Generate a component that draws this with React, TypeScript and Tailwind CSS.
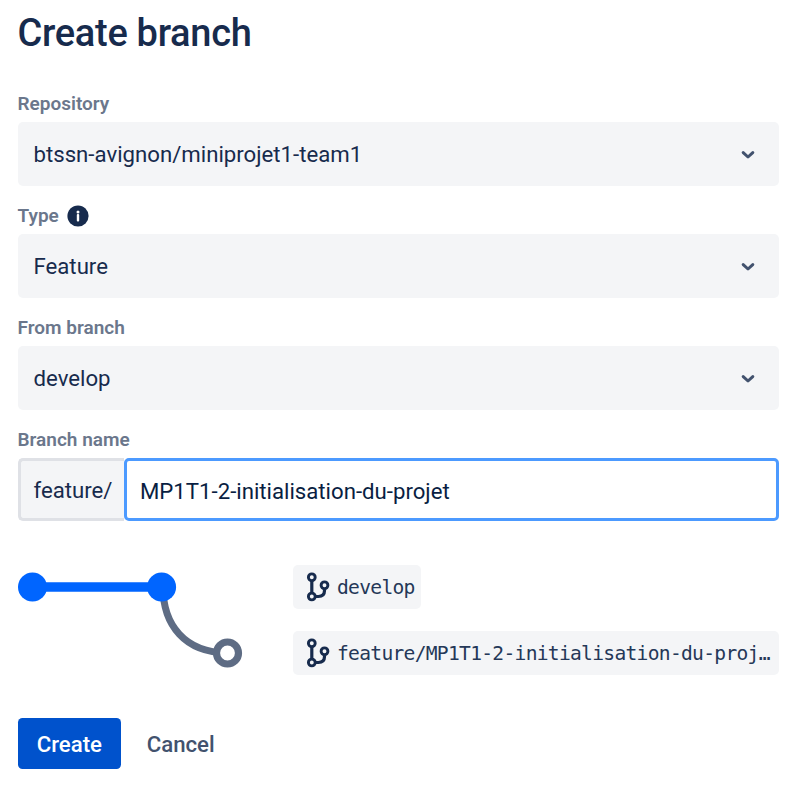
import React from "react";

function Chevron() {
  return (
    <svg className="mr-[24.3px] h-[14px] w-[14px] shrink-0" viewBox="0 0 14 14" fill="none">
      <path d="M2.2 5.6 7 10 11.8 5.6" stroke="#42526E" strokeWidth="3" strokeLinecap="round" strokeLinejoin="round" />
    </svg>
  );
}

function InfoIcon() {
  return (
    <svg className="ml-[8.6px] h-[22px] w-[22px]" viewBox="0 0 22 22">
      <circle cx="11" cy="11" r="10.6" fill="#172B4D" />
      <circle cx="11" cy="6.9" r="1.5" fill="#fff" />
      <rect x="9.8" y="9.1" width="2.4" height="7.3" rx="0.9" fill="#fff" />
    </svg>
  );
}

function BranchIcon() {
  return (
    <svg className="h-[30px] w-[24px] shrink-0" viewBox="0 0 24 30" fill="none" stroke="#172B4D" strokeWidth="2.9">
      <circle cx="5.8" cy="5.3" r="3.4" />
      <circle cx="5.8" cy="24.5" r="3.4" />
      <circle cx="18.5" cy="13.3" r="3.4" />
      <path d="M5.8 8.7v12.4" strokeWidth="3.2" />
      <path d="M9.2 24.5h3.2c4 0 6.1-2 6.1-6v-1.8" strokeWidth="3.2" />
    </svg>
  );
}

function Label({ children }: { children: React.ReactNode }) {
  return (
    <label className="flex h-[24px] items-center text-[19px] leading-[24px] font-[600] text-[#6B778C]">{children}</label>
  );
}

function SelectField({ label, value, info }: { label: string; value: string; info?: boolean }) {
  return (
    <div className="h-[112px]">
      <Label>
        <span>{label}</span>
        {info && <InfoIcon />}
      </Label>
      <button className="mt-[6.3px] flex h-[63.5px] w-full items-center justify-between rounded-[5px] bg-[#F4F5F7] pl-[16px] text-left">
        <span className="text-[22.2px] leading-[32px] text-[#172B4D]">{value}</span>
        <Chevron />
      </button>
    </div>
  );
}

function BranchTag({ name, fill }: { name: string; fill?: boolean }) {
  return (
    <div
      className={`flex h-[44.3px] items-center rounded-[5px] bg-[#F4F5F7] pr-[6.5px] pl-[13px] ${fill ? "w-full" : "w-fit"}`}
    >
      <BranchIcon />
      <span className="ml-[7px] pt-[1px] font-['DejaVu_Sans_Mono',monospace] text-[19.6px] leading-[32px] tracking-[-0.7px] whitespace-nowrap text-[#253858]">
        {name}
      </span>
    </div>
  );
}

export default function App() {
  return (
    <main className="h-[786px] w-[800px] overflow-hidden bg-white pr-[21px] pl-[17.5px] font-[Roboto,sans-serif] text-[#172B4D]">
      <h1 className="pt-[11px] text-[38px] leading-[44px] font-medium tracking-[-0.3px]">Create branch</h1>
      <form className="mt-[37px]">
        <SelectField label="Repository" value="btssn-avignon/miniprojet1-team1" />
        <SelectField label="Type" value="Feature" info />
        <SelectField label="From branch" value="develop" />
        <Label>
          <span>Branch name</span>
        </Label>
        <div className="mt-[6px] flex h-[63.3px]">
          <div className="flex w-[106.5px] items-center rounded-l-[5px] border-[3px] border-r-0 border-[#DFE1E6] bg-[#F4F5F7] pt-[2px] pl-[13px] text-[22.2px]">
            feature/
          </div>
          <div className="flex flex-1 items-center rounded-[5px] border-[3px] border-[#4C9AFF] pt-[3.5px] pl-[13px] text-[22.2px] text-[#091E42]">
            MP1T1-2-initialisation-du-projet
          </div>
        </div>
      </form>
      <div className="mt-[43.7px] flex">
        <svg className="mt-[6.3px] h-[100px] w-[275.5px] shrink-0" viewBox="0 0 275.5 100">
          <path d="M145 16c0 38 22 65.7 64 65.7" fill="none" stroke="#5E6C84" strokeWidth="7" />
          <path d="M14 16H144" stroke="#0065FF" strokeWidth="9.5" />
          <circle cx="14.5" cy="16" r="14.5" fill="#0065FF" />
          <circle cx="143.6" cy="16" r="14.5" fill="#0065FF" />
          <circle cx="209.5" cy="82" r="11" fill="#fff" stroke="#5E6C84" strokeWidth="7.2" />
        </svg>
        <div className="flex min-w-0 flex-1 flex-col gap-[21.8px]">
          <BranchTag name="develop" />
          <BranchTag name="feature/MP1T1-2-initialisation-du-proj…" fill />
        </div>
      </div>
      <div className="mt-[43.1px] flex items-center text-[22.2px] font-medium">
        <button className="h-[50.5px] w-[103.7px] rounded-[4.5px] bg-[#0052CC] pt-[1px] text-white">Create</button>
        <button className="ml-[25.5px] pt-[1px] text-[#42526E]">Cancel</button>
      </div>
    </main>
  );
}
